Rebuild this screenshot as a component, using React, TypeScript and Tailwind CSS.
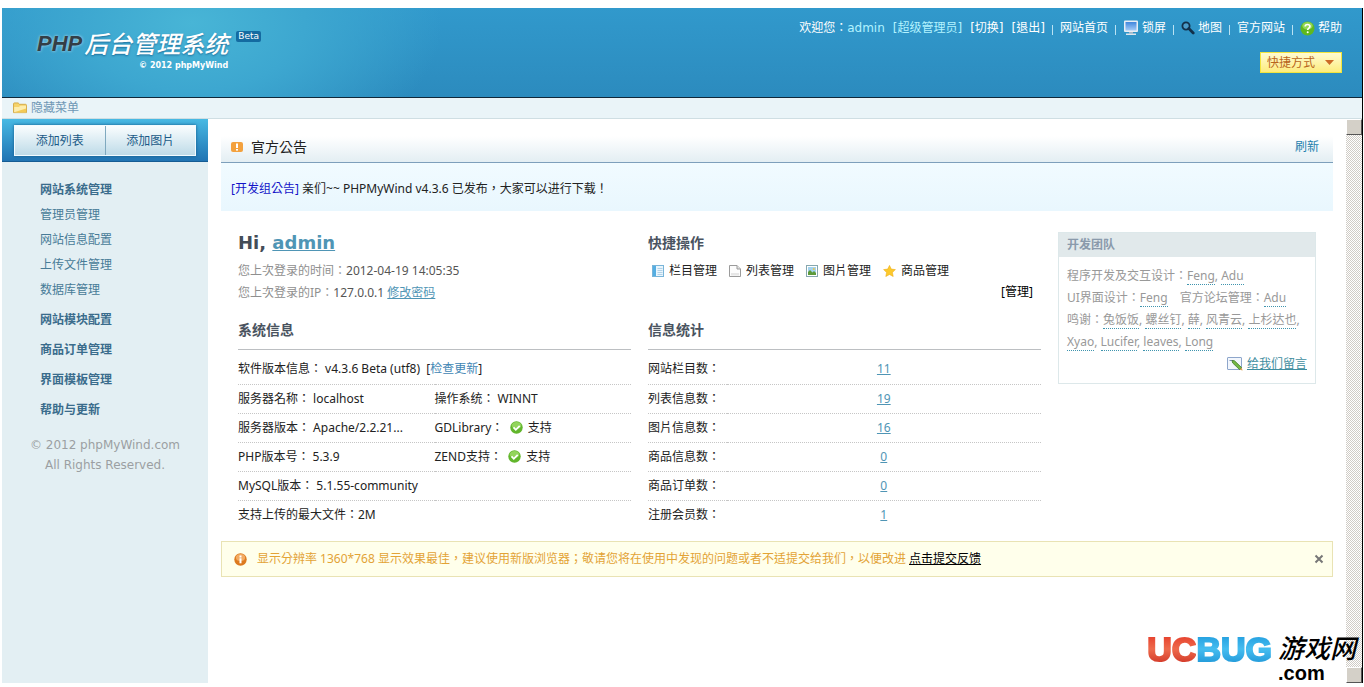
import type { ReactNode } from "react";

const ScreenIcon = () => (
  <svg width="16" height="16" viewBox="0 0 16 16" aria-hidden="true">
    <defs>
      <linearGradient id="screen" x1="0" y1="0" x2="0" y2="1">
        <stop offset="0" stopColor="#3f86dd" />
        <stop offset="1" stopColor="#a5ccf7" />
      </linearGradient>
    </defs>
    <rect x="1" y="0.5" width="14" height="11.5" rx="1" fill="#e8eef5" />
    <rect x="2.5" y="2" width="11" height="8.5" fill="url(#screen)" />
    <rect x="6" y="12" width="4" height="1.5" fill="#a8b6c4" />
    <rect x="3" y="13.5" width="10" height="1.5" fill="#dfe6ec" />
  </svg>
);

const SearchIcon = () => (
  <svg width="14" height="14" viewBox="0 0 14 14" aria-hidden="true">
    <circle cx="5" cy="5" r="3.6" fill="#4b9cc9" stroke="#12304a" strokeWidth="1.8" />
    <path d="M7.8 7.6 12.2 12" stroke="#12304a" strokeWidth="2.8" strokeLinecap="round" />
  </svg>
);

const HelpIcon = () => (
  <svg width="15" height="15" viewBox="0 0 15 15" aria-hidden="true">
    <circle cx="7.5" cy="7.5" r="7" fill="#5fb81f" />
    <ellipse cx="7.5" cy="4.8" rx="5.2" ry="3.8" fill="#93d754" />
    <path
      d="M5.2 5.6C5.2 4.2 6.2 3.5 7.5 3.5s2.4.7 2.4 2c0 1.6-2.2 1.6-2.2 3.4"
      fill="none"
      stroke="#fff"
      strokeWidth="1.7"
    />
    <circle cx="7.7" cy="11.2" r="1" fill="#fff" />
  </svg>
);

const FolderIcon = () => (
  <svg width="14" height="12" viewBox="0 0 15 13" aria-hidden="true">
    <path d="M.5 11.5V2c0-.6.3-1 1-1h4l1.5 1.5h6.5c.6 0 1 .4 1 1v8z" fill="#f6d36b" stroke="#d3a743" />
    <path d="M1.2 11V5.5h5L8 4h6v7z" fill="#fdedae" />
    <path d="M1.2 11 14 7v4z" fill="#f3ca56" />
  </svg>
);

const NoticeIcon = () => (
  <svg width="12" height="12" viewBox="0 0 12 12" aria-hidden="true">
    <rect y="1" width="12" height="10" rx="2" fill="#f3a13e" />
    <rect x="5" y="2.5" width="2" height="4.5" fill="#fff" />
    <rect x="5" y="8" width="2" height="1.6" fill="#fff" />
  </svg>
);

const ColumnIcon = () => (
  <svg width="12" height="12" viewBox="0 0 12 12" aria-hidden="true">
    <rect x=".5" y=".5" width="11" height="11" fill="#eaf6fd" stroke="#79b5d9" />
    <rect x="1" y="1" width="3" height="10" fill="#55aee2" />
    <path d="M5.5 3.5h5M5.5 5.5h5M5.5 7.5h5M5.5 9.5h5" stroke="#a3c8df" strokeWidth=".8" />
  </svg>
);

const FileIcon = () => (
  <svg width="12" height="12" viewBox="0 0 12 12" aria-hidden="true">
    <path d="M.5.5h7.5l3.5 3.5v7.5H.5z" fill="#fcfcfc" stroke="#9b9b9b" />
    <path d="M8 .5V4h3.5" fill="#e3e3e3" stroke="#9b9b9b" />
    <path d="M2 8h8v2.5H2z" fill="#e6e6e6" />
  </svg>
);

const ImageIcon = () => (
  <svg width="12" height="12" viewBox="0 0 12 12" aria-hidden="true">
    <rect x=".5" y=".5" width="11" height="11" fill="#fff" stroke="#86a7ae" />
    <rect x="2" y="2" width="8" height="8" fill="#a4d3ee" />
    <path d="M2 10V7l2-2 2.500 2.500L8 6l2 2v2z" fill="#5d9a3a" />
    <circle cx="7.8" cy="4" r="1" fill="#e9c34a" />
  </svg>
);

const StarIcon = () => (
  <svg width="13" height="12" viewBox="0 0 13 12" aria-hidden="true">
    <path
      d="M6.5.4 8.3 4.1l4.1.5-3 2.8.8 4.1-3.7-2-3.7 2 .8-4.1-3-2.8 4.1-.5z"
      fill="#fcc92c"
      stroke="#eeb01d"
      strokeWidth=".6"
      strokeLinejoin="round"
    />
  </svg>
);

const CheckIcon = () => (
  <svg width="13" height="13" viewBox="0 0 13 13" aria-hidden="true" className="mr-0.5 inline-block align-[-2px]">
    <circle cx="6.5" cy="6.5" r="6.2" fill="#62b62c" />
    <ellipse cx="6.5" cy="4.5" rx="4.8" ry="3.5" fill="#93d45c" />
    <path d="m3.5 6.3 2.3 2.5 3.9-4" fill="none" stroke="#fff" strokeWidth="1.7" />
  </svg>
);

const PencilIcon = () => (
  <svg width="16" height="14" viewBox="0 0 16 14" aria-hidden="true">
    <rect x=".5" y=".5" width="14" height="12" rx=".5" fill="#f3f7fd" stroke="#8ea6cb" />
    <path d="M2.5 3.5h4" stroke="#7a8fb2" />
    <path d="m5 3.5 2.5.3 7 6.7-1.8 2.2-7-6.7z" fill="#74b845" stroke="#417c27" strokeWidth=".8" />
    <path d="m12.7 12.7 1.8-2.2 1.2 3z" fill="#d9a257" />
  </svg>
);

const InfoIcon = () => (
  <svg width="13" height="13" viewBox="0 0 13 13" aria-hidden="true">
    <circle cx="6.5" cy="6.5" r="6.2" fill="#dd7a1f" />
    <ellipse cx="6.5" cy="4.5" rx="4.6" ry="3.5" fill="#f3ab62" />
    <rect x="5.5" y="2.5" width="2" height="2" fill="#fff" />
    <rect x="5.5" y="5.3" width="2" height="5" fill="#fff" />
  </svg>
);

const menu = [
  {
    title: "网站系统管理",
    items: ["管理员管理", "网站信息配置", "上传文件管理", "数据库管理"],
  },
  { title: "网站模块配置", items: [] },
  { title: "商品订单管理", items: [] },
  { title: "界面模板管理", items: [] },
  { title: "帮助与更新", items: [] },
];

const shortcuts = [
  { label: "栏目管理", icon: <ColumnIcon /> },
  { label: "列表管理", icon: <FileIcon /> },
  { label: "图片管理", icon: <ImageIcon /> },
  { label: "商品管理", icon: <StarIcon /> },
];

const stats = [
  { label: "网站栏目数：", value: 11 },
  { label: "列表信息数：", value: 19 },
  { label: "图片信息数：", value: 16 },
  { label: "商品信息数：", value: 0 },
  { label: "商品订单数：", value: 0 },
  { label: "注册会员数：", value: 1 },
];

const Bar = () => <span className="mt-1 h-2.5 w-px bg-[#b9e2f3]" />;

const Header = () => (
  <header className="flex h-[90px] justify-between border-b border-[#10283a] bg-[radial-gradient(ellipse_250px_150px_at_190px_15px,#48b5d6,#3da7d0_45%,transparent),linear-gradient(#3199cc,#2c8bbe)] pr-5">
    <div className="flex items-start pt-5 pl-[35px]">
      <div>
        <h1 className="flex items-center gap-0.5 leading-8 italic">
          <span className="font-['Liberation_Sans',sans-serif] text-[22px] font-bold text-[#333e46] [text-shadow:0_0_3px_#ffffffb0]">
            PHP
          </span>
          <span className="text-2xl leading-8 font-medium text-white [text-shadow:0_1px_2px_#1c6d9a]">
            后台管理系统
          </span>
        </h1>
        <p className="text-right font-['DejaVu_Sans',sans-serif] text-[8px] leading-3 font-bold text-white">
          © 2012 phpMyWind
        </p>
      </div>
      <span className="mt-[3px] ml-2 rounded-xs bg-[#146ba1] px-0.5 font-['DejaVu_Sans',sans-serif] text-[9px] leading-[11px] text-white">
        Beta
      </span>
    </div>

    <div className="flex flex-col items-end gap-3.5 pt-2.5">
      <nav className="flex items-center gap-[7px] leading-5 whitespace-nowrap text-white">
        <div className="flex gap-2 font-['DejaVu_Sans','Noto_Sans_CJK_TC',sans-serif]">
          <span>
            欢迎您：<span className="text-[#b3f3ff]">admin</span>
          </span>
          <span className="text-[#b3f3ff]">[超级管理员]</span>
          <a href="#switch">[切换]</a>
          <a href="#logout">[退出]</a>
        </div>
        <Bar />
        <a href="#home">网站首页</a>
        <Bar />
        <a href="#lock" className="flex items-center gap-[3px]">
          <ScreenIcon />
          锁屏
        </a>
        <Bar />
        <a href="#map" className="flex items-center gap-[3px]">
          <SearchIcon />
          地图
        </a>
        <Bar />
        <a href="#official">官方网站</a>
        <Bar />
        <a href="#help" className="flex items-center gap-[3px]">
          <HelpIcon />
          帮助
        </a>
      </nav>
      <div className="relative">
        <select
          aria-label="快捷方式"
          className="block h-[21px] w-[82px] appearance-none border border-[#f2e53c] bg-linear-to-b from-[#fffbd0] to-[#fdec7c] pl-1.5 text-xs leading-4 text-[#b8651b]"
        >
          <option>快捷方式</option>
        </select>
        <svg
          width="9"
          height="5"
          viewBox="0 0 9 5"
          aria-hidden="true"
          className="pointer-events-none absolute top-2 right-2"
        >
          <path d="M0 0h9L4.5 5z" fill="#cc6a26" />
        </svg>
      </div>
    </div>
  </header>
);

const Sidebar = () => (
  <aside className="w-[206px] shrink-0 bg-[#e3eff3]">
    <div className="h-[43px] border-b border-[#155c94] bg-linear-to-b from-[#48b9e3] to-[#2174b3] px-3 pt-1.5">
      <div className="flex h-[31px] border border-[#f2fbff] bg-linear-to-b from-[#fafdfe] to-[#bedbe8] shadow-[0_0_3px_#145a8a] [&>button]:flex-1">
        <button className="cursor-pointer border-r border-[#7fa9bf] text-[#1b5a87]">添加列表</button>
        <button className="cursor-pointer text-[#1b5a87]">添加图片</button>
      </div>
    </div>
    <nav className="pt-[15px] pl-[38px] text-[#477b97]">
      {menu.map((group) => (
        <section key={group.title} className="pb-[5px]">
          <h2 className="leading-[25px] font-bold text-[#3a6c8c]">{group.title}</h2>
          <ul>
            {group.items.map((item) => (
              <li key={item} className="leading-[25px]">
                <a href="#menu">{item}</a>
              </li>
            ))}
          </ul>
        </section>
      ))}
    </nav>
    <p className="mt-2 text-center font-['DejaVu_Sans',sans-serif] leading-5 text-[#9b9fa2]">
      © 2012 phpMyWind.com
      <br />
      All Rights Reserved.
    </p>
  </aside>
);

const SectionTitle = ({ children }: { children: ReactNode }) => (
  <h3 className="mb-[5px] border-b border-[#bcbfc2] pb-2 text-sm leading-[22px] font-bold text-[#4a5360]">
    {children}
  </h3>
);

const TextLink = ({ children }: { children: ReactNode }) => (
  <a href="#link" className="text-[#4f95b5] underline">
    {children}
  </a>
);

const Member = ({ children }: { children: ReactNode }) => (
  <a href="#member" className="border-b border-dotted border-[#3f94ae]">
    {children}
  </a>
);

const rowClass = "h-[29px] border-b border-dotted border-[#c6c6c6] last:border-0";

const SystemInfo = () => (
  <div className="min-w-0 flex-1">
    <h2 className="font-['DejaVu_Sans',sans-serif] text-lg leading-[22px] font-bold text-[#444d58]">
      Hi, <TextLink>admin</TextLink>
    </h2>
    <div className="mt-1.5 mb-[15px] leading-[22px] text-[#8f8f8f]">
      <p>
        您上次登录的时间：<span className="text-[#555]">2012-04-19 14:05:35</span>
      </p>
      <p>
        您上次登录的IP：<span className="text-[#555]">127.0.0.1</span> <TextLink>修改密码</TextLink>
      </p>
    </div>
    <SectionTitle>系统信息</SectionTitle>
    <table className="w-full table-fixed">
      <tbody>
        <tr className={rowClass}>
          <td colSpan={2}>
            软件版本信息： v4.3.6 Beta (utf8) &nbsp;[
            <a href="#update" className="text-[#3f86b4]">
              检查更新
            </a>
            ]
          </td>
        </tr>
        <tr className={rowClass}>
          <td>服务器名称： localhost</td>
          <td>操作系统： WINNT</td>
        </tr>
        <tr className={rowClass}>
          <td>服务器版本： Apache/2.2.21...</td>
          <td>
            GDLibrary： &nbsp;<CheckIcon /> 支持
          </td>
        </tr>
        <tr className={rowClass}>
          <td>PHP版本号： 5.3.9</td>
          <td>
            ZEND支持： &nbsp;<CheckIcon /> 支持
          </td>
        </tr>
        <tr className={rowClass}>
          <td colSpan={2}>MySQL版本： 5.1.55-community</td>
        </tr>
        <tr className={rowClass}>
          <td colSpan={2}>支持上传的最大文件：2M</td>
        </tr>
      </tbody>
    </table>
  </div>
);

const Statistics = () => (
  <div className="min-w-0 flex-1">
    <h3 className="text-sm leading-[22px] font-bold text-[#4a5360]">快捷操作</h3>
    <ul className="mt-1.5 flex h-[22px] items-center gap-3 pl-1">
      {shortcuts.map((s) => (
        <li key={s.label}>
          <a href="#shortcut" className="flex items-center gap-[5px]">
            {s.icon}
            {s.label}
          </a>
        </li>
      ))}
    </ul>
    <p className="mb-[17px] pr-2 text-right leading-5 text-black">
      [<a href="#manage">管理</a>]
    </p>
    <SectionTitle>信息统计</SectionTitle>
    <table className="w-full table-fixed">
      <tbody>
        {stats.map((s) => (
          <tr key={s.label} className={rowClass}>
            <th className="w-1/5 text-left font-normal whitespace-nowrap">{s.label}</th>
            <td className="text-center">
              <TextLink>{s.value}</TextLink>
            </td>
          </tr>
        ))}
      </tbody>
    </table>
  </div>
);

const Team = () => (
  <aside className="w-[258px] shrink-0 border border-[#dde8ea] text-[#999]">
    <h3 className="bg-[#e1e9eb] pl-2 leading-6 font-bold text-[#8a9aab]">开发团队</h3>
    <div className="px-2 pt-2 pb-2 leading-[22px] whitespace-nowrap">
      <p>
        程序开发及交互设计：<Member>Feng</Member>, <Member>Adu</Member>
      </p>
      <p>
        UI界面设计：<Member>Feng</Member>
        <span className="ml-3">官方论坛管理：</span>
        <Member>Adu</Member>
      </p>
      <p>
        鸣谢：<Member>兔饭饭</Member>, <Member>螺丝钉</Member>, <Member>薛</Member>,{" "}
        <Member>风青云</Member>, <Member>上杉达也</Member>,
      </p>
      <p>
        <Member>Xyao</Member>, <Member>Lucifer</Member>, <Member>leaves</Member>,{" "}
        <Member>Long</Member>
      </p>
      <a href="#message" className="flex items-center justify-end gap-1 text-[#3f8ea0]">
        <PencilIcon />
        <span className="underline">给我们留言</span>
      </a>
    </div>
  </aside>
);

const ScrollBar = () => (
  <div
    aria-hidden="true"
    className="flex w-4 shrink-0 flex-col justify-between bg-[repeating-conic-gradient(#d0ccc6_0_25%,#fff_0_50%)] bg-[length:2px_2px] *:size-4 *:border *:border-t-white *:border-r-[#555] *:border-b-[#555] *:border-l-white *:bg-[#d4d0c8]"
  >
    <div />
    <div />
  </div>
);

const Watermark = () => (
  <div className="pointer-events-none absolute right-2 bottom-1 flex items-end gap-1.5 font-['Liberation_Sans','Noto_Sans_CJK_SC',sans-serif] font-bold">
    <span className="pb-3.5 text-[34px] leading-10 [-webkit-text-stroke:2px_transparent] [&>span]:bg-clip-text [&>span]:text-transparent">
      <span className="bg-linear-to-b from-[#e2231c] via-[#ee6a4c] to-[#c9221c]">UC</span>
      <span className="bg-linear-to-b from-[#0f93d8] via-[#45bdf0] to-[#128fd2]">BUG</span>
    </span>
    <span className="flex flex-col text-black">
      <span className="text-[26px] leading-7 font-medium italic">游戏网</span>
      <span className="text-xl leading-5">.com</span>
    </span>
  </div>
);

const App = () => {
  return (
    <div className="relative flex min-h-screen flex-col bg-white pt-2 pr-px pb-1 pl-0.5 font-['Noto_Sans','Noto_Sans_CJK_TC',sans-serif] text-xs text-[#222]">
      <div className="flex flex-1 flex-col border-r border-black">
        <Header />
        <div className="flex h-[21px] items-center border-b border-[#cfdee3] bg-[#eaf4f8] pl-[11px]">
          <button className="flex cursor-pointer items-center gap-1 text-[#6f98b5]">
            <FolderIcon />
            隐藏菜单
          </button>
        </div>
        <div className="flex flex-1">
          <Sidebar />
          <main className="min-w-0 flex-1 px-[13px]">
            <div className="flex h-11 items-center justify-between border-b border-[#7d9fbb] bg-linear-to-b from-white from-40% to-[#e3eef3] px-2.5 pt-3">
              <h2 className="flex items-center gap-2 text-sm text-[#222]">
                <NoticeIcon />
                官方公告
              </h2>
              <button className="cursor-pointer pr-1 text-[#2380ad]">刷新</button>
            </div>
            <p className="bg-linear-to-b from-[#f1fbff] to-[#e9f7fe] px-2.5 pt-1 leading-[44px]">
              <a href="#notice" className="text-[#1414c8]">
                [开发组公告]
              </a>{" "}
              亲们~~ PHPMyWind v4.3.6 已发布，大家可以进行下载！
            </p>
            <div className="flex items-start gap-[17px] px-[17px] pt-[21px]">
              <SystemInfo />
              <Statistics />
              <Team />
            </div>
            <div className="mt-3 flex h-9 items-center border border-[#e9e3b4] bg-[#ffffeb] px-3 text-[#e3a336]">
              <InfoIcon />
              <p className="ml-2.5 flex-1">
                显示分辨率 1360*768 显示效果最佳，建议使用新版浏览器；敬请您将在使用中发现的问题或者不适提交给我们，以便改进{" "}
                <a href="#feedback" className="text-black underline">
                  点击提交反馈
                </a>
              </p>
              <button aria-label="关闭" className="-mr-3 cursor-pointer px-2">
                <svg width="10" height="10" viewBox="0 0 10 10" aria-hidden="true">
                  <path d="m1.5 1.5 7 7m0-7-7 7" stroke="#777" strokeWidth="2" />
                </svg>
              </button>
            </div>
          </main>
          <ScrollBar />
        </div>
      </div>
      <Watermark />
    </div>
  );
};

export default App;
